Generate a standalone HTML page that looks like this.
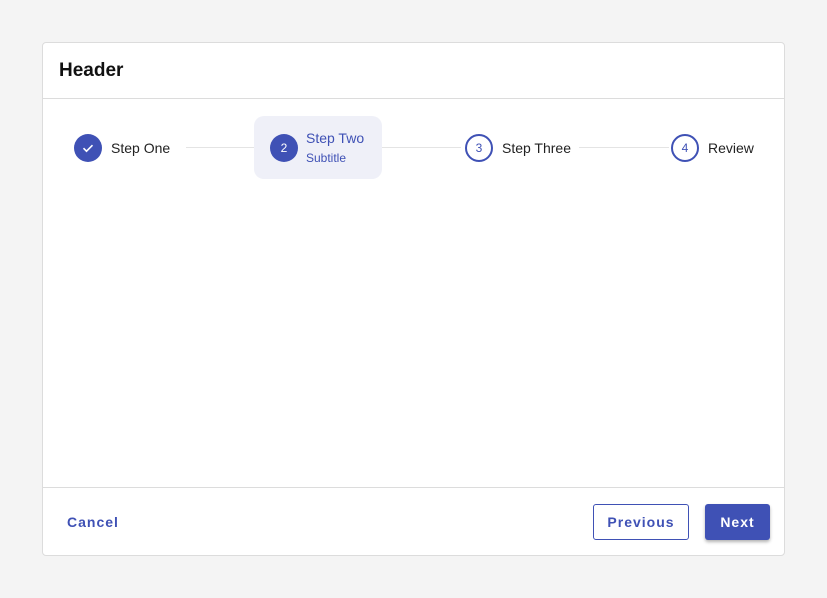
<!DOCTYPE html>
<html><head><style>
body{margin:0;width:827px;height:598px;background:#f4f4f4;font-family:"Liberation Sans",sans-serif;position:relative;overflow:hidden}
.card{position:absolute;left:42px;top:42px;width:741px;height:512px;background:#fff;border:1px solid #dcdcdc;border-radius:4px}
.hdr{height:55px;border-bottom:1px solid #dcdcdc;font-size:19px;font-weight:bold;color:#111;line-height:56px;padding-left:16px}
.abs{position:absolute}
.c{position:absolute;width:28px;height:28px;border-radius:50%;box-sizing:border-box;font-size:12px;text-align:center;line-height:28px}
.f{background:#3f51b5;color:#fff}
.o{border:2px solid #3f51b5;color:#3f51b5;line-height:24px;background:#fff}
.lbl{position:absolute;font-size:14px;color:#222}
.line{position:absolute;height:1px;background:#e4e4e4;top:104px}
.foot{position:absolute;left:0;right:0;top:444px;border-top:1px solid #dcdcdc}
.btn{position:absolute;font-size:14px;font-weight:bold;letter-spacing:1px;text-align:center;border-radius:3px;box-sizing:border-box}
</style></head><body>
<div class="card">
<div class="hdr">Header</div>
<div class="line" style="left:143px;width:68px"></div>
<div class="line" style="left:338px;width:80px"></div>
<div class="line" style="left:536px;width:90px"></div>
<div class="c f" style="left:31px;top:91px"><svg width="28" height="28" viewBox="0 0 28 28"><path d="M9.5 14.2l3 3 6-6" stroke="#fff" stroke-width="1.6" fill="none"/></svg></div>
<div class="lbl" style="left:68px;top:97px">Step One</div>
<div class="abs" style="left:211px;top:73px;width:128px;height:63px;background:#eff0f8;border-radius:10px"></div>
<div class="c f" style="left:227px;top:91px">2</div>
<div class="lbl" style="left:263px;top:87px;color:#3f51b5">Step Two</div>
<div class="lbl" style="left:263px;top:108px;color:#3f51b5;font-size:12px">Subtitle</div>
<div class="c o" style="left:422px;top:91px">3</div>
<div class="lbl" style="left:459px;top:97px">Step Three</div>
<div class="c o" style="left:628px;top:91px">4</div>
<div class="lbl" style="left:665px;top:97px">Review</div>
<div class="foot"></div>
<div class="btn" style="left:24px;top:471px;color:#3f51b5">Cancel</div>
<div class="btn" style="left:550px;top:461px;width:96px;height:36px;border:1px solid #3f51b5;color:#3f51b5;line-height:34px">Previous</div>
<div class="btn" style="left:662px;top:461px;width:65px;height:36px;background:#3f51b5;color:#fff;line-height:36px;box-shadow:0 2px 3px rgba(0,0,0,.3)">Next</div>
</div>
</body></html>
